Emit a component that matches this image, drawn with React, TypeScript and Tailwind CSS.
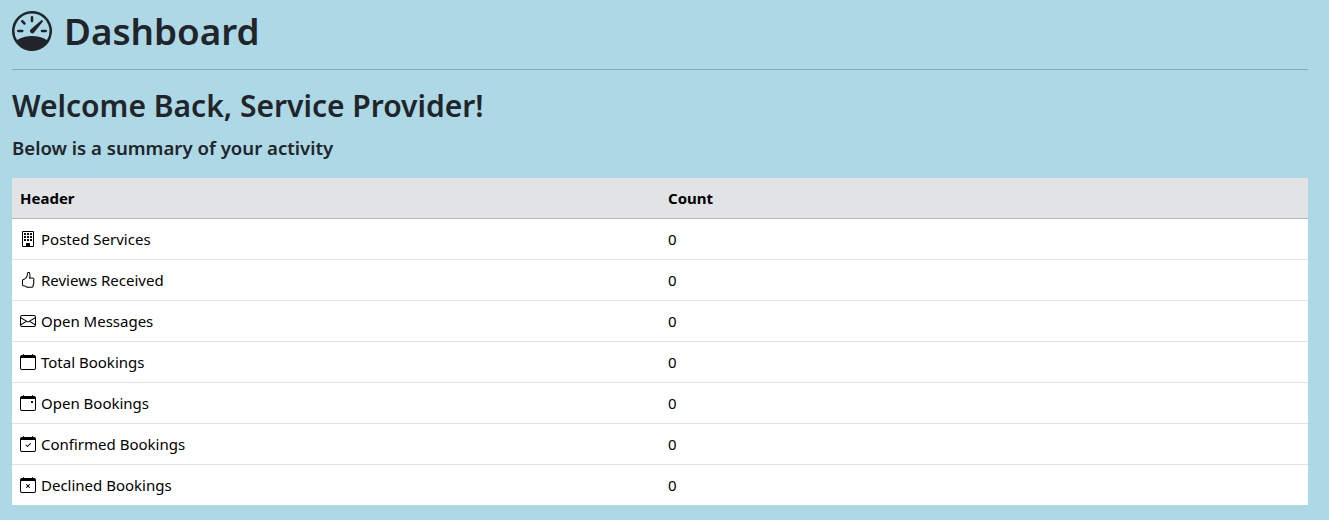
import { BsSpeedometer, BsBuilding, BsHandThumbsUp, BsEnvelope, BsCalendar, BsCalendarCheck, BsCalendarX } from "react-icons/bs";
import type { ReactNode } from "react";

const CalendarDot = () => (
  <svg viewBox="0 0 16 16" width="16" height="16" fill="currentColor">
    <path d="M3.5 0a.5.5 0 0 1 .5.5V1h8V.5a.5.5 0 0 1 1 0V1h1a2 2 0 0 1 2 2v11a2 2 0 0 1-2 2H2a2 2 0 0 1-2-2V3a2 2 0 0 1 2-2h1V.5a.5.5 0 0 1 .5-.5zM1 4v10a1 1 0 0 0 1 1h12a1 1 0 0 0 1-1V4H1z" />
    <path d="M11 6.5a.5.5 0 0 1 .5-.5h1a.5.5 0 0 1 .5.5v1a.5.5 0 0 1-.5.5h-1a.5.5 0 0 1-.5-.5v-1z" />
  </svg>
);

const rows: { icon: ReactNode; label: string }[] = [
  { icon: <BsBuilding size={16} />, label: "Posted Services" },
  { icon: <BsHandThumbsUp size={16} />, label: "Reviews Received" },
  { icon: <BsEnvelope size={16} />, label: "Open Messages" },
  { icon: <BsCalendar size={16} />, label: "Total Bookings" },
  { icon: <CalendarDot />, label: "Open Bookings" },
  { icon: <BsCalendarCheck size={16} />, label: "Confirmed Bookings" },
  { icon: <BsCalendarX size={16} />, label: "Declined Bookings" },
];

export default function App() {
  return (
    <div className="min-h-[520px] bg-[#add8e6] pl-3 pr-[21px] pt-[7px] text-[#212529] font-['Noto_Sans','Open_Sans',sans-serif]">
      <h1 className="flex items-center gap-3 text-[36.8px] leading-[48px] font-semibold">
        <BsSpeedometer size={40} />
        <span>Dashboard</span>
      </h1>
      <hr className="mt-[14px] mb-[17px] border-t border-[#8aa9b5]" />
      <h2 className="text-[30px] leading-[38px] font-semibold mb-[11px]">Welcome Back, Service Provider!</h2>
      <h5 className="text-[18.6px] leading-[24px] font-semibold mb-[18px]">Below is a summary of your activity</h5>
      <div className="bg-white text-black text-[15px]">
        <div className="grid grid-cols-2 h-[41px] items-center bg-[#e2e3e5] border-b border-[#b5b6b7] font-bold">
          <div className="px-2">Header</div>
          <div className="px-2">Count</div>
        </div>
        {rows.map((r, i) => (
          <div key={r.label} className={i < rows.length - 1 ? "grid grid-cols-2 h-[41px] items-center border-b border-[#dee2e6]" : "grid grid-cols-2 h-[40px] items-center"}>
            <div className="px-2 flex items-center gap-[5px]">
              {r.icon}
              <span>{r.label}</span>
            </div>
            <div className="px-2">0</div>
          </div>
        ))}
      </div>
    </div>
  );
}
